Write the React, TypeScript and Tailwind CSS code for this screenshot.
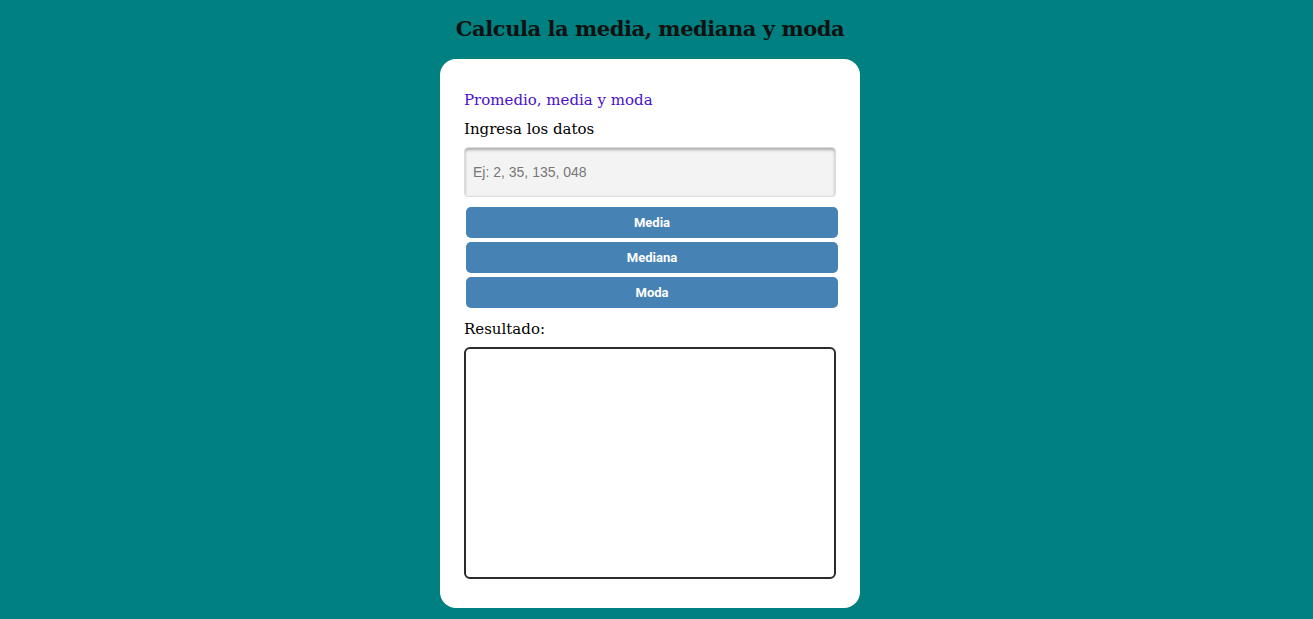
export default function App() {
  const buttons = ['Media', 'Mediana', 'Moda']

  return (
    <div className="min-h-[619px] bg-[#008080] font-['DejaVu_Serif',serif]">
      <div className="w-[1300px] flex flex-col items-center pt-[14px] pb-[11px]">
        <h1 className="text-[21px] leading-[30px] font-bold text-[#111] tracking-[-0.45px]">
          Calcula la media, mediana y moda
        </h1>
        <div className="mt-[15px] w-[420px] bg-white rounded-[16px] px-6 pt-[30px] pb-[29px]">
          <p className="text-[15px] leading-[22px] text-[#4a0fcb]">Promedio, media y moda</p>
          <label className="block mt-[7px] text-[15px] leading-[22px] text-black">
            Ingresa los datos
          </label>
          <input
            type="text"
            placeholder="Ej: 2, 35, 135, 048"
            className="mt-[7px] block w-full h-[50px] rounded-[4px] bg-[#f3f3f3] border border-[#ddd] px-2 text-[14px] font-['Liberation_Sans',sans-serif] text-[#333] placeholder:text-[#777] shadow-[inset_0_2px_3px_rgba(0,0,0,0.3)] outline-none"
          />
          <div className="mt-[10px] flex flex-col gap-1 pl-[2px]">
            {buttons.map((b) => (
              <button
                key={b}
                className="w-[372px] h-[31px] rounded-[5px] bg-[#4682b4] text-white text-[13px] font-bold font-['Roboto',sans-serif]"
              >
                {b}
              </button>
            ))}
          </div>
          <p className="mt-[10px] text-[15px] leading-[22px] text-black">Resultado:</p>
          <div className="mt-[7px] h-[232px] w-full rounded-[6px] border-2 border-[#2b2b2b]" />
        </div>
      </div>
    </div>
  )
}
